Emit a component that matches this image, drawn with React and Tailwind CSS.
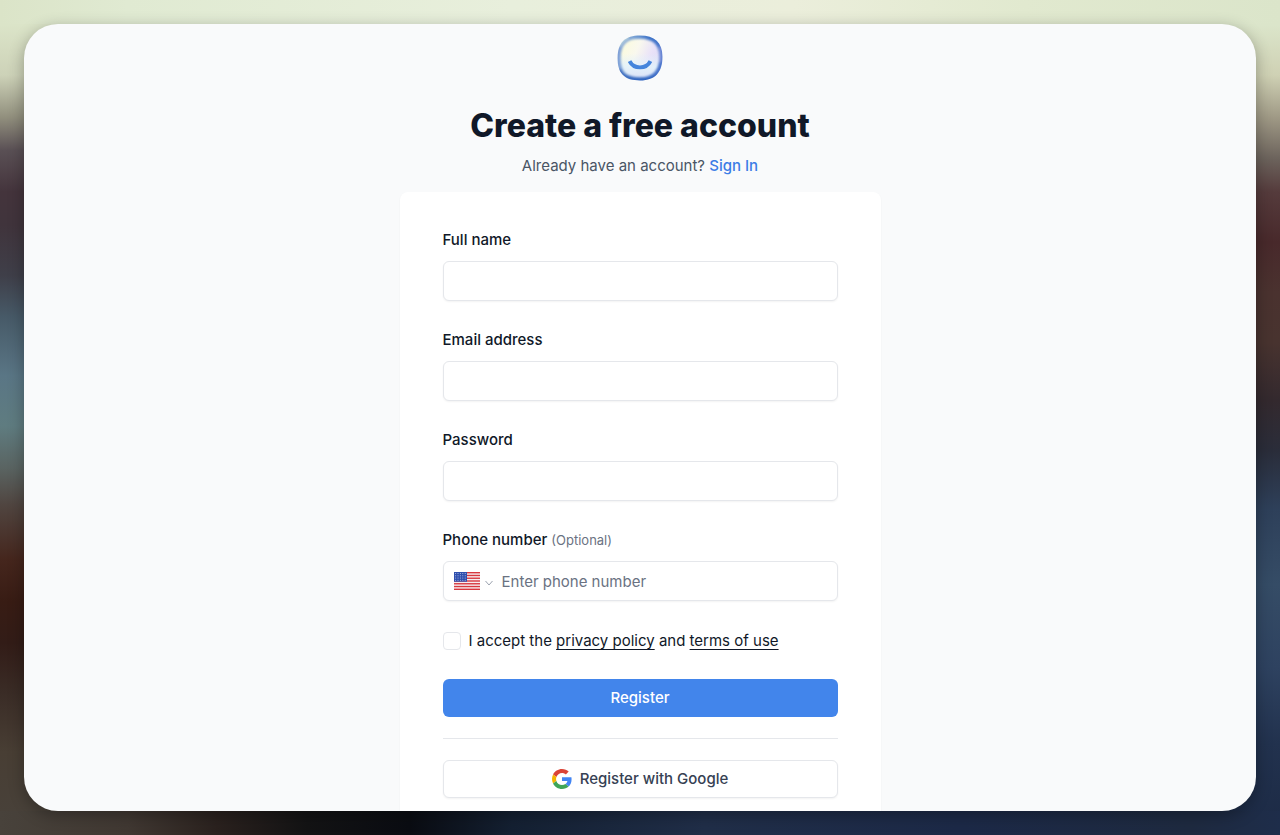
import React from "react";

function Logo() {
  const outline = "M23 1.5C37 1.5 44.5 8 44.5 22S38 44.5 23 44.5 1.5 38 1.5 23 9 1.5 23 1.5Z";
  return (
    <svg viewBox="0 0 46 46" className="size-12" aria-hidden="true">
      <defs>
        <linearGradient id="rim" x1="0" y1="0.4" x2="1" y2="0.6">
          <stop offset="0" stopColor="#7f9fd8" />
          <stop offset="0.25" stopColor="#7fa6d6" />
          <stop offset="0.6" stopColor="#3f74c8" />
          <stop offset="1" stopColor="#4a74cc" />
        </linearGradient>
        <linearGradient id="face" x1="0" y1="0.1" x2="1" y2="0.5">
          <stop offset="0.1" stopColor="#fbfbdc" />
          <stop offset="0.45" stopColor="#f9f8ee" />
          <stop offset="0.75" stopColor="#e9e2f8" />
          <stop offset="1" stopColor="#dedcf5" />
        </linearGradient>
        <linearGradient id="base" x1="0" y1="0" x2="0" y2="1">
          <stop offset="0.4" stopColor="#e2f2fb" stopOpacity="0" />
          <stop offset="0.7" stopColor="#e2f2fb" stopOpacity="0.9" />
          <stop offset="1" stopColor="#dbe0f6" />
        </linearGradient>
        <filter id="soft" x="-20%" y="-20%" width="140%" height="140%">
          <feGaussianBlur stdDeviation="0.9" />
        </filter>
        <clipPath id="shape">
          <path d={outline} />
        </clipPath>
      </defs>
      <g clipPath="url(#shape)">
        <path d={outline} fill="url(#face)" />
        <path d={outline} fill="url(#base)" />
        <g filter="url(#soft)" fill="none">
          <path d={outline} stroke="url(#rim)" strokeWidth="6" />
          <path d="M3 34C8 46 36 47 42 38" stroke="#2f63bd" strokeWidth="3" />
          <path d="M3 12C5 7 8 5 12 3" stroke="#b5d0dc" strokeWidth="3" />
          <path d="M42 12C43 17 43 22 42.5 27" stroke="#8f9de0" strokeWidth="1.5" />
        </g>
      </g>
      <path d="M13 26C17 34 29 34 33 26" fill="none" stroke="#4585dc" strokeWidth="3.8" />
    </svg>
  );
}

function UsFlag() {
  const stripes = [0, 2, 4, 6, 8, 10, 12];
  const stars = [];
  for (let r = 0; r < 4; r++) for (let c = 0; c < 5; c++) stars.push([1.6 + c * 2.4, 1.4 + r * 2.3]);
  return (
    <svg viewBox="0 0 26 18" preserveAspectRatio="none" className="h-[18px] w-[26px]" role="img" aria-label="United States">
      <rect width="26" height="18" fill="#f6eef0" />
      {stripes.map((s) => (
        <rect key={s} y={(s * 18) / 13} width="26" height={18 / 13} fill="#d8383f" />
      ))}
      <rect width="13" height="9.7" fill="#2f4fae" />
      {stars.map(([x, y]) => (
        <circle key={`${x}-${y}`} cx={x} cy={y} r="0.5" fill="#c9d2ea" />
      ))}
    </svg>
  );
}

function GoogleMark() {
  return (
    <svg viewBox="0 0 48 48" className="size-5" aria-hidden="true">
      <path fill="#DB4437" d="M24 9.5c3.54 0 6.71 1.22 9.21 3.6l6.85-6.85C35.9 2.38 30.47 0 24 0 14.62 0 6.51 5.38 2.56 13.22l7.98 6.19C12.43 13.72 17.74 9.5 24 9.5z" />
      <path fill="#4285F4" d="M46.98 24.55c0-1.57-.15-3.09-.38-4.55H24v9.02h12.94c-.58 2.96-2.26 5.48-4.78 7.18l7.73 6c4.51-4.18 7.09-10.36 7.09-17.65z" />
      <path fill="#F4B400" d="M10.53 28.59c-.48-1.45-.76-2.99-.76-4.59s.27-3.14.76-4.59l-7.98-6.19C.92 16.46 0 20.12 0 24c0 3.88.92 7.54 2.56 10.78l7.97-6.19z" />
      <path fill="#3FA558" d="M24 48c6.48 0 11.93-2.13 15.89-5.81l-7.73-6c-2.15 1.45-4.92 2.3-8.16 2.3-6.26 0-11.57-4.22-13.47-9.91l-7.98 6.19C6.51 42.62 14.62 48 24 48z" />
    </svg>
  );
}

const backdrop = {
  backgroundImage: [
    "linear-gradient(90deg, #dbe4c8 0%, #e0ead2 10%, #e8efdc 40%, #ebeedb 62%, #e1e9cf 80%, #dbe5ca 100%)",
    "linear-gradient(90deg, #48423b 0%, #403832 10%, #2a211e 17%, #131314 24%, #0a0c12 32%, #142032 40%, #202e48 55%, #1c2947 75%, #1e2a40 93%, #1e2d4a 100%)",
    "linear-gradient(180deg, #dbe4c8 3%, #cdd2b8 9%, #92907e 14%, #5a5055 18%, #44343c 23%, #40343c 27%, #3f3f49 33%, #475a68 38%, #5a7685 45%, #5f7c80 51%, #5a6462 56%, #504540 60.5%, #45261d 67%, #381c14 72%, #321c17 77%, #3a2c26 83%, #483e34 90%, #48423b 100%)",
    "linear-gradient(180deg, #dbe5ca 3%, #cfd1b4 9%, #a09a86 14%, #6c635c 19%, #553b3c 23%, #48292b 29%, #4a322f 35%, #48332f 41%, #33292e 48%, #2a2d3a 54%, #2e405a 61%, #354c66 70%, #2e4260 80%, #22324e 89%, #1c2a45 100%)",
  ].join(","),
  backgroundSize: "100% 24px, 100% 24px, 50% 100%, 50% 100%",
  backgroundPosition: "top, bottom, left, right",
  backgroundRepeat: "no-repeat",
};

const control =
  "h-10 w-full rounded-md border border-gray-200 bg-white px-3 text-[15px] text-gray-900 shadow-xs outline-none focus:border-blue-500";

function Field({ id, label, type, autoComplete }) {
  return (
    <div className="flex flex-col gap-[9px]">
      <label htmlFor={id} className="text-[15px] leading-6 font-medium text-gray-900">{label}</label>
      <input id={id} name={id} type={type} autoComplete={autoComplete} className={control} />
    </div>
  );
}

export default function App() {
  return (
    <div className="min-h-screen p-6 font-[Inter,'Liberation_Sans',sans-serif] text-gray-900" style={backdrop}>
      <main className="flex flex-col items-center overflow-hidden rounded-[34px] bg-gray-50 px-4 pt-[10px] shadow-[0_4px_16px_rgba(0,0,0,0.3)]">
        <Logo />
        <h1 className="mt-6 text-center text-[32px] leading-10 font-extrabold">Create a free account</h1>
        <p className="mt-2 text-[15px] leading-6 text-gray-600">
          Already have an account? <a href="#sign-in" className="font-medium text-[#3b7ce6]">Sign In</a>
        </p>
        <form className="mt-[14px] w-full max-w-[481px] rounded-t-lg bg-white px-[43px] pt-9 pb-[13px] shadow-xs">
          <div className="flex flex-col gap-[27px]">
            <Field id="name" label="Full name" type="text" autoComplete="name" />
            <Field id="email" label="Email address" type="email" autoComplete="email" />
            <Field id="password" label="Password" type="password" autoComplete="new-password" />
            <div className="flex flex-col gap-[9px]">
              <label htmlFor="phone" className="text-[15px] leading-6 font-medium">
                Phone number <span className="text-[13px] font-normal text-gray-500">(Optional)</span>
              </label>
              <div className="flex h-10 items-center rounded-md border border-gray-200 bg-white pl-[10px] shadow-xs">
                <button type="button" aria-label="Select country" className="flex items-center gap-1">
                  <UsFlag />
                  <svg viewBox="0 0 10 10" className="mt-1 size-[10px]" fill="none" stroke="#9ca3af" aria-hidden="true">
                    <path d="M1.5 3 5 7 8.5 3" />
                  </svg>
                </button>
                <input id="phone" name="phone" type="tel" placeholder="Enter phone number" className="h-full min-w-0 flex-1 bg-transparent px-2 text-[15px] outline-none placeholder:text-gray-500" />
              </div>
            </div>
          </div>
          <div className="mt-7 flex items-center gap-2">
            <input id="terms" type="checkbox" className="size-[18px] appearance-none rounded border border-gray-200 bg-white checked:bg-blue-500" />
            <label htmlFor="terms" className="text-[15px] leading-6">
              I accept the <a href="#privacy" className="underline underline-offset-3">privacy policy</a> and <a href="#terms-of-use" className="underline underline-offset-3">terms of use</a>
            </label>
          </div>
          <button type="submit" className="mt-[26px] h-[38px] w-full rounded-md bg-[#4285eb] text-[15px] font-medium text-white">Register</button>
          <hr className="my-[21px] border-gray-200" />
          <button type="button" className="flex h-[38px] w-full items-center justify-center gap-2 rounded-md border border-gray-200 bg-white text-[15px] font-medium text-gray-700 shadow-xs">
            <GoogleMark />
            Register with Google
          </button>
        </form>
      </main>
    </div>
  );
}
